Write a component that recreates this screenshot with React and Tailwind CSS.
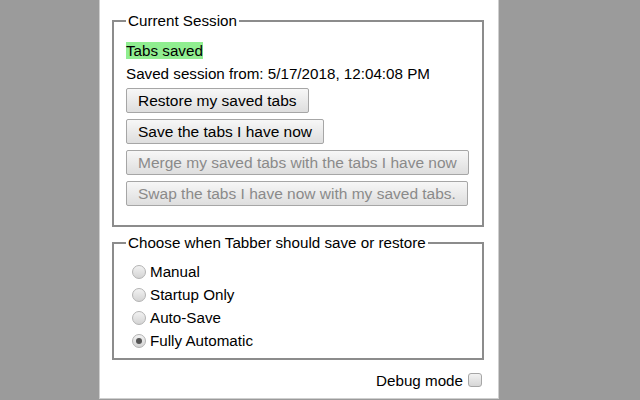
export default function App() {
  const btn =
    "h-[25px] self-start px-[11px] border border-[#a6a6a6] rounded-[2px] bg-gradient-to-b from-[#f7f7f7] to-[#dedede] leading-[17px] text-left text-[15.5px]";
  const radios = [
    ["Manual", false],
    ["Startup Only", false],
    ["Auto-Save", false],
    ["Fully Automatic", true],
  ];
  return (
    <div
      className="w-[640px] h-[400px] bg-[#9b9b9b] flex text-[15.2px] text-black"
      style={{ fontFamily: '"Liberation Sans", Arial, sans-serif' }}
    >
      <div className="ml-[99px] w-[400px] h-[399px] bg-white border-x border-b border-[#cfcfcf] pl-[12px] pr-[14px] pt-[12px] flex flex-col">
        <fieldset className="border-2 border-[#8c8c8c] pl-[12px] pr-[9px] pb-[19px] flex flex-col">
          <legend className="px-[2px] leading-[18px]">Current Session</legend>
          <div className="mt-[12px] leading-[17px]">
            <span className="bg-[#90ee90]">Tabs saved</span>
          </div>
          <div className="mt-[6px] leading-[17px]">
            Saved session from: 5/17/2018, 12:04:08 PM
          </div>
          <div className="mt-[6px] flex flex-col gap-[6px]">
            <button className={btn}>Restore my saved tabs</button>
            <button className={btn}>Save the tabs I have now</button>
            <button className={btn + " text-[#8a8a8a]"} disabled>
              Merge my saved tabs with the tabs I have now
            </button>
            <button className={btn + " text-[#8a8a8a]"} disabled>
              Swap the tabs I have now with my saved tabs.
            </button>
          </div>
        </fieldset>
        <fieldset className="mt-[7px] border-2 border-[#8c8c8c] pl-[12px] pr-[9px] pb-[6px] flex flex-col">
          <legend className="px-[2px] leading-[18px]">
            Choose when Tabber should save or restore
          </legend>
          <div className="mt-[8px] flex flex-col">
            {radios.map(([label, checked]) => (
              <div key={label} className="h-[23px] flex items-center">
                <span className="ml-[6px] w-[14px] h-[14px] rounded-full border border-[#b3b3b3] bg-gradient-to-b from-[#f2f2f2] to-[#d4d4d4] flex items-center justify-center">
                  {checked && (
                    <span className="w-[6px] h-[6px] rounded-full bg-[#555]" />
                  )}
                </span>
                <span className="ml-[4px] leading-[17px]">{label}</span>
              </div>
            ))}
          </div>
        </fieldset>
        <div className="mt-[10px] h-[20px] flex items-center justify-end pr-[2px]">
          <span className="leading-[17px]">Debug mode</span>
          <span className="ml-[5px] w-[14px] h-[14px] rounded-[3px] border border-[#a6a6a6] bg-gradient-to-b from-[#f2f2f2] to-[#d6d6d6]" />
        </div>
      </div>
    </div>
  );
}
